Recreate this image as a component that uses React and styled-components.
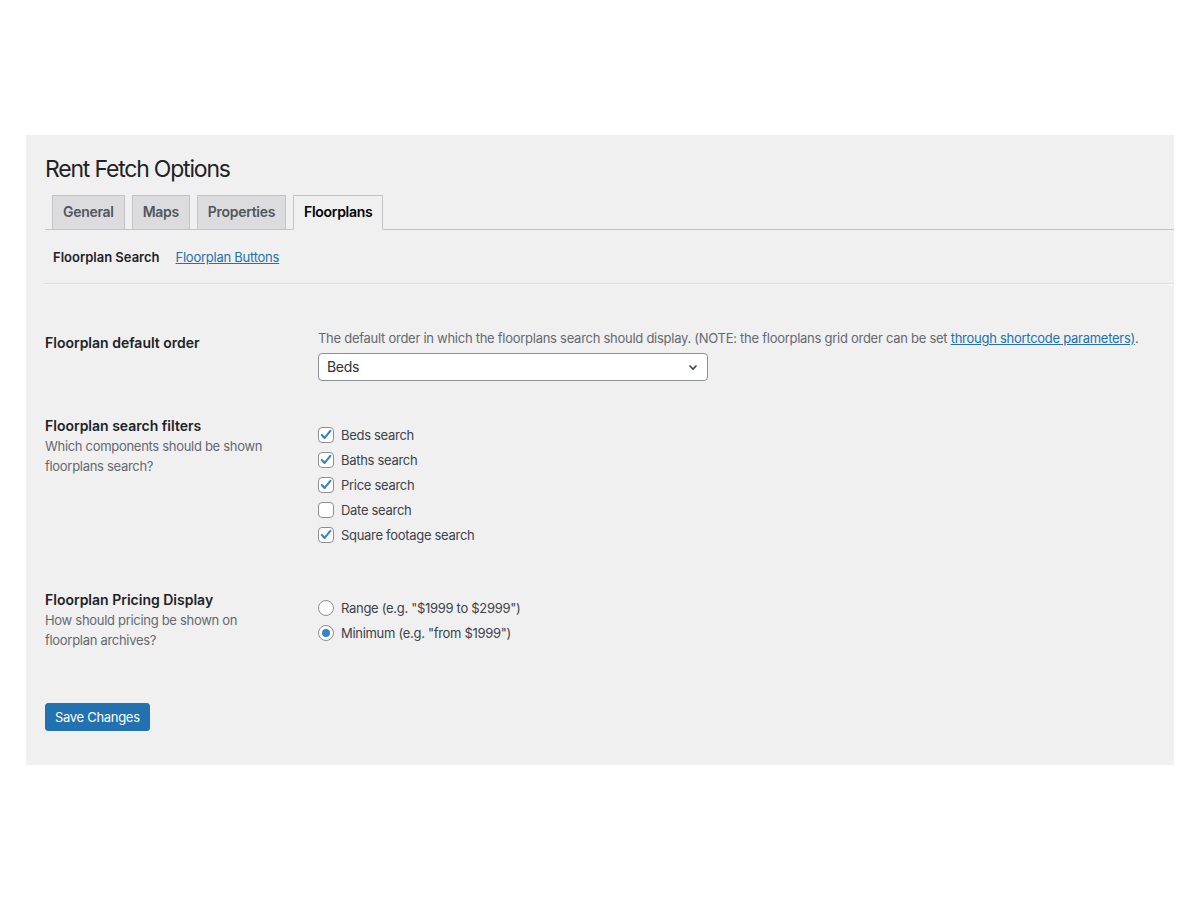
import React from 'react';
import styled, { createGlobalStyle } from 'styled-components';

const GlobalStyle = createGlobalStyle`
  html, body {
    margin: 0;
    padding: 0;
    background: #ffffff;
  }
  body {
    font-family: Inter, "Noto Sans", "Liberation Sans", sans-serif;
    color: #3c434a;
    -webkit-font-smoothing: antialiased;
  }
`;

const Page = styled.div`
  padding: 135px 26px 0 26px;
`;

const Panel = styled.div`
  background: #f0f0f1;
  padding: 19px 0 34px 19px;
`;

const Title = styled.h1`
  margin: 0;
  font-size: 23px;
  font-weight: 400;
  line-height: 30px;
  letter-spacing: -1.2px;
  color: #1d2327;
`;

const TabBar = styled.nav`
  display: flex;
  align-items: flex-end;
  margin-top: 11px;
  border-bottom: 1px solid #c3c4c7;
  height: 34px;
`;

const Tab = styled.a`
  display: block;
  box-sizing: border-box;
  height: 35px;
  margin-left: 7px;
  margin-bottom: -1px;
  padding: 0 10px;
  border: 1px solid #c3c4c7;
  border-bottom-color: ${(p) => (p.$active ? '#f0f0f1' : '#c3c4c7')};
  background: ${(p) => (p.$active ? '#f0f0f1' : '#dcdcde')};
  color: ${(p) => (p.$active ? '#000000' : '#50575e')};
  font-size: 14px;
  font-weight: 600;
  line-height: 32px;
  letter-spacing: -0.3px;
  text-decoration: none;
  white-space: nowrap;
`;

const SubNav = styled.div`
  display: flex;
  gap: 16px;
  margin-top: 17px;
  padding-left: 8px;
  font-size: 13px;
  line-height: 20px;
`;

const SubCurrent = styled.span`
  font-weight: 600;
  color: #1d2327;
`;

const SubLink = styled.a`
  color: #2271b1;
  letter-spacing: -0.25px;
  text-decoration: underline;
`;

const Divider = styled.hr`
  margin: 16px 0 0 0;
  border: 0;
  border-top: 1px solid #dcdcde;
  border-bottom: 1px solid #f6f7f7;
`;

const Row = styled.div`
  display: grid;
  grid-template-columns: 273px 1fr;
  margin-top: ${(p) => p.$gap}px;
`;

const LabelCol = styled.div`
  padding-top: ${(p) => p.$pad || 0}px;
`;

const FieldCol = styled.div`
  padding-top: ${(p) => p.$pad || 0}px;
`;

const Heading = styled.div`
  font-size: 14px;
  font-weight: 600;
  line-height: 18px;
  color: #1d2327;
`;

const Desc = styled.p`
  margin: 1px 0 0 0;
  width: 230px;
  font-size: 13px;
  line-height: 20px;
  letter-spacing: -0.3px;
  color: #646970;
`;

const Note = styled.p`
  margin: 0;
  font-size: 13px;
  line-height: 20px;
  letter-spacing: -0.27px;
  color: #646970;
  white-space: nowrap;
`;

const NoteLink = styled.a`
  color: #2271b1;
  text-decoration: underline;
`;

const SelectBox = styled.div`
  position: relative;
  box-sizing: border-box;
  width: 390px;
  height: 28px;
  margin-top: 5px;
  padding: 0 24px 0 8px;
  border: 1px solid #8c8f94;
  border-radius: 4px;
  background: #ffffff;
  color: #2c3338;
  font-size: 14px;
  line-height: 26px;
  letter-spacing: -0.3px;
`;

const Chevron = styled.svg`
  position: absolute;
  right: 6px;
  top: 5px;
`;

const Option = styled.label`
  display: flex;
  align-items: center;
  gap: 7px;
  height: 25px;
  font-size: 13px;
  letter-spacing: -0.3px;
  color: #3c434a;
`;

const Box = styled.span`
  position: relative;
  box-sizing: border-box;
  width: 16px;
  height: 16px;
  flex: none;
  border: 1px solid #8c8f94;
  border-radius: ${(p) => (p.$round ? '50%' : '4px')};
  background: #ffffff;
`;

const Dot = styled.span`
  position: absolute;
  left: 3px;
  top: 3px;
  width: 8px;
  height: 8px;
  border-radius: 50%;
  background: #3582c4;
`;

const Tick = styled.svg`
  position: absolute;
  left: 0;
  top: 0;
`;

const SaveButton = styled.button`
  display: block;
  margin-top: 53px;
  height: 28px;
  padding: 0 9px;
  border: 1px solid #2271b1;
  border-radius: 3px;
  background: #2271b1;
  color: #ffffff;
  font-family: inherit;
  font-size: 13px;
  line-height: 26px;
  letter-spacing: -0.3px;
  cursor: pointer;
`;

const Checkbox = ({ checked, children }) => (
  <Option>
    <Box>
      {checked && (
        <Tick width="14" height="14" viewBox="0 0 14 14">
          <path d="M2.8 7 L5.6 9.9 L11.4 2.8" fill="none" stroke="#3582c4" strokeWidth="2.1" strokeLinecap="round" strokeLinejoin="round" />
        </Tick>
      )}
    </Box>
    {children}
  </Option>
);

const Radio = ({ checked, children }) => (
  <Option>
    <Box $round>{checked && <Dot />}</Box>
    {children}
  </Option>
);

const filters = [
  { label: 'Beds search', checked: true },
  { label: 'Baths search', checked: true },
  { label: 'Price search', checked: true },
  { label: 'Date search', checked: false },
  { label: 'Square footage search', checked: true },
];

const App = () => {
  return (
    <Page>
      <GlobalStyle />
      <Panel>
        <Title>Rent Fetch Options</Title>

        <TabBar>
          <Tab href="#">General</Tab>
          <Tab href="#">Maps</Tab>
          <Tab href="#">Properties</Tab>
          <Tab href="#" $active>Floorplans</Tab>
        </TabBar>

        <SubNav>
          <SubCurrent>Floorplan Search</SubCurrent>
          <SubLink href="#">Floorplan Buttons</SubLink>
        </SubNav>
        <Divider />

        <Row $gap={38}>
          <LabelCol $pad={11}>
            <Heading>Floorplan default order</Heading>
          </LabelCol>
          <FieldCol $pad={5}>
            <Note>
              The default order in which the floorplans search should display. (NOTE: the floorplans grid order can be set{' '}
              <NoteLink href="#">through shortcode parameters)</NoteLink>.
            </Note>
            <SelectBox>
              Beds
              <Chevron width="16" height="16" viewBox="0 0 16 16">
                <path d="M4.5 6.5 L8 10 L11.5 6.5" fill="none" stroke="#3c434a" strokeWidth="1.6" />
              </Chevron>
            </SelectBox>
          </FieldCol>
        </Row>

        <Row $gap={36}>
          <LabelCol>
            <Heading>Floorplan search filters</Heading>
            <Desc>Which components should be shown floorplans search?</Desc>
          </LabelCol>
          <FieldCol $pad={5}>
            {filters.map((f) => (
              <Checkbox key={f.label} checked={f.checked}>{f.label}</Checkbox>
            ))}
          </FieldCol>
        </Row>

        <Row $gap={44}>
          <LabelCol>
            <Heading>Floorplan Pricing Display</Heading>
            <Desc>How should pricing be shown on floorplan archives?</Desc>
          </LabelCol>
          <FieldCol $pad={4}>
            <Radio>Range (e.g. "$1999 to $2999")</Radio>
            <Radio checked>Minimum (e.g. "from $1999")</Radio>
          </FieldCol>
        </Row>

        <SaveButton type="button">Save Changes</SaveButton>
      </Panel>
    </Page>
  );
};

export default App;
